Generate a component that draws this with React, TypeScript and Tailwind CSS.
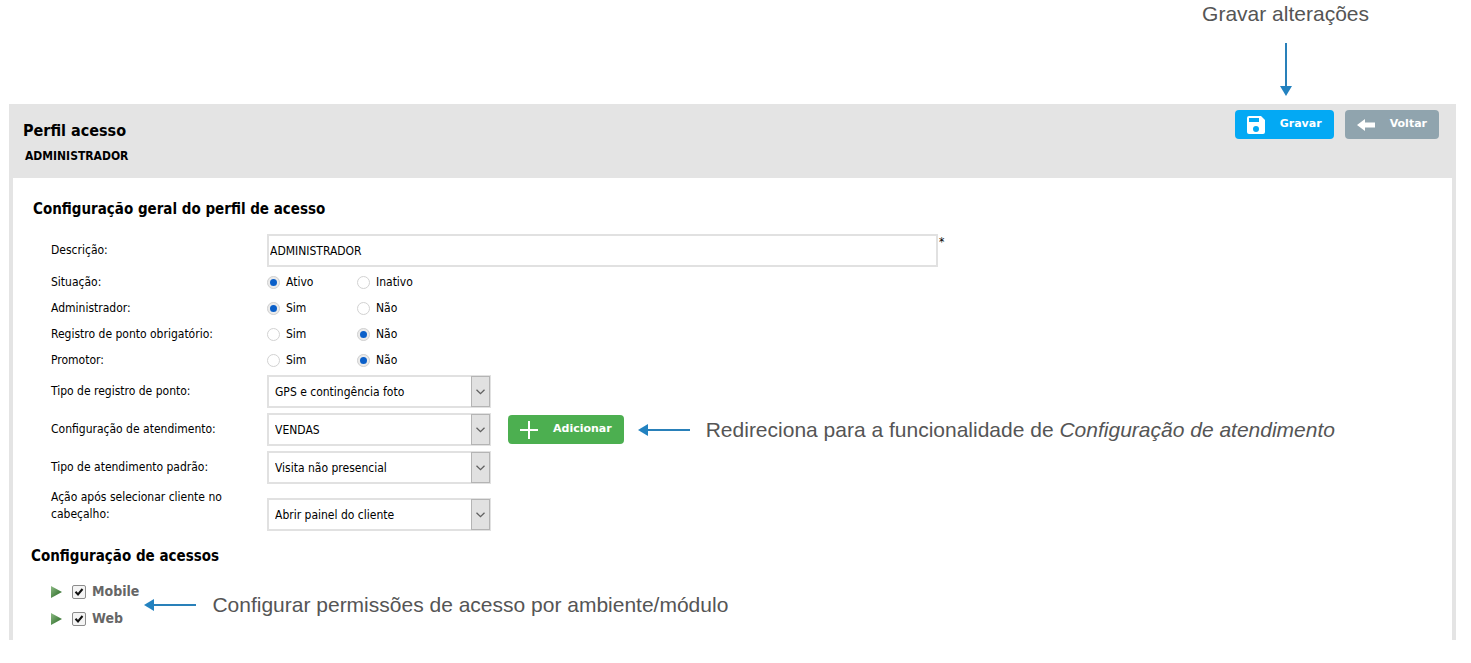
import { useId } from 'react'
import type { ReactNode } from 'react'

interface RadioOption {
  label: string
  checked?: boolean
}

interface RadioField {
  label: string
  name: string
  options: RadioOption[]
}

const radioFields: RadioField[] = [
  {
    label: 'Situação:',
    name: 'situacao',
    options: [{ label: 'Ativo', checked: true }, { label: 'Inativo' }],
  },
  {
    label: 'Administrador:',
    name: 'administrador',
    options: [{ label: 'Sim', checked: true }, { label: 'Não' }],
  },
  {
    label: 'Registro de ponto obrigatório:',
    name: 'registro',
    options: [{ label: 'Sim' }, { label: 'Não', checked: true }],
  },
  {
    label: 'Promotor:',
    name: 'promotor',
    options: [{ label: 'Sim' }, { label: 'Não', checked: true }],
  },
]

export default function App() {
  return (
    <div className="bg-white pr-[15px] pb-6 pl-[9px] font-['DejaVu_Sans_Condensed','DejaVu_Sans',sans-serif] text-[12px] text-black">
      <div className="flex h-[104px] justify-end pr-[87px]">
        <div className="flex flex-col items-center">
          <Note>Gravar alterações</Note>
          <ArrowDown />
        </div>
      </div>
      <main className="bg-[#e4e4e4] px-1">
        <header className="flex h-[74px] items-start justify-between pt-[6px] pr-[13px] pl-[10px]">
          <div className="pt-[10px]">
            <h1 className="text-[16px] leading-[22px] font-bold">
              Perfil acesso
            </h1>
            <p className="mt-[6px] pl-[2px] text-[12px] leading-4 font-bold">
              ADMINISTRADOR
            </p>
          </div>
          <div className="flex gap-[11px]">
            <Button className="bg-[#03a9f4]">
              <SaveIcon />
              <span>Gravar</span>
            </Button>
            <Button className="bg-[#90a4ae]">
              <BackIcon />
              <span>Voltar</span>
            </Button>
          </div>
        </header>
        <div className="bg-white pt-[19px] pb-2">
          <section>
            <h2 className="pl-5 text-[15px] leading-6 font-bold">
              Configuração geral do perfil de acesso
            </h2>
            <div className="mt-[11px] pl-[38px]">
              <div className="flex h-[37px] items-start pt-[2px]">
                <label
                  htmlFor="descricao"
                  className="w-[216px] shrink-0 leading-[33px]"
                >
                  Descrição:
                </label>
                <input
                  id="descricao"
                  defaultValue="ADMINISTRADOR"
                  className="h-[33px] w-[671px] border-2 border-[#e1e1e1] bg-white px-px outline-none"
                />
                <span className="pl-px leading-4">*</span>
              </div>
              {radioFields.map(field => (
                <RadioRow key={field.name} {...field} />
              ))}
              <SelectRow
                label="Tipo de registro de ponto:"
                value="GPS e contingência foto"
              />
              <SelectRow label="Configuração de atendimento:" value="VENDAS">
                <Button className="ml-[17px] bg-[#4caf50]">
                  <PlusIcon />
                  <span>Adicionar</span>
                </Button>
                <div className="ml-[14px] flex items-center gap-4">
                  <ArrowLeft />
                  <Note>
                    Redireciona para a funcionalidade de{' '}
                    <em>Configuração de atendimento</em>
                  </Note>
                </div>
              </SelectRow>
              <SelectRow
                label="Tipo de atendimento padrão:"
                value="Visita não presencial"
              />
              <SelectRow
                label="Ação após selecionar cliente no cabeçalho:"
                value="Abrir painel do cliente"
                tall
              />
            </div>
          </section>
          <section>
            <h2 className="mt-[10px] pl-[18px] text-[15px] leading-6 font-bold">
              Configuração de acessos
            </h2>
            <div className="mt-[10px] flex items-center pl-[38px]">
              <ul>
                <AccessItem label="Mobile" />
                <AccessItem label="Web" />
              </ul>
              <div className="ml-[5px] flex items-center gap-4">
                <ArrowLeft />
                <Note>Configurar permissões de acesso por ambiente/módulo</Note>
              </div>
            </div>
          </section>
        </div>
      </main>
    </div>
  )
}

function Note({ children }: { children: ReactNode }) {
  return (
    <p className="font-['Liberation_Sans',Arial,sans-serif] text-[21px] leading-7 whitespace-nowrap text-[#555]">
      {children}
    </p>
  )
}

function Button({
  className,
  children,
}: {
  className: string
  children: ReactNode
}) {
  return (
    <button
      type="button"
      className={`flex h-[29px] shrink-0 items-center gap-[15px] rounded px-3 font-['DejaVu_Sans',sans-serif] text-[11px] font-bold text-white ${className}`}
    >
      {children}
    </button>
  )
}

function RadioRow({ label, name, options }: RadioField) {
  return (
    <fieldset className="flex h-[26px] items-center">
      <legend className="float-left w-[216px] leading-[26px]">{label}</legend>
      {options.map(option => (
        <label key={option.label} className="flex w-[90px] items-center gap-[6px]">
          <input
            type="radio"
            name={name}
            defaultChecked={option.checked}
            className="size-[13px] appearance-none rounded-full border border-[#d2d2d2] bg-white checked:border-[3px] checked:border-[#ebebeb] checked:bg-[#0a5fc9] checked:outline checked:-outline-offset-1 checked:outline-[#d2d2d2]"
          />
          {option.label}
        </label>
      ))}
    </fieldset>
  )
}

interface SelectRowProps {
  label: string
  value: string
  tall?: boolean
  children?: ReactNode
}

function SelectRow({ label, value, tall, children }: SelectRowProps) {
  const id = useId()

  return (
    <div className="flex items-start pt-[2px] pb-[3px]">
      <label
        htmlFor={id}
        className={
          tall
            ? 'w-[216px] shrink-0 pr-8 leading-[17px]'
            : 'w-[216px] shrink-0 leading-[33px]'
        }
      >
        {label}
      </label>
      <div className={tall ? 'relative mt-[9px]' : 'relative'}>
        <select
          id={id}
          className="block h-[33px] w-[224px] appearance-none border-2 border-[#e1e1e1] bg-white pl-[6px] outline-none"
        >
          <option>{value}</option>
        </select>
        <span className="pointer-events-none absolute inset-y-px right-px flex w-[19px] items-center justify-center border border-[#b4b4b4] bg-[#e1e1e1]">
          <svg width="9" height="6" viewBox="0 0 9 6" fill="none">
            <path d="M.5 .7l4 4l4-4" stroke="#606060" strokeWidth="1.3" />
          </svg>
        </span>
      </div>
      {children && <div className="flex h-[33px] items-center">{children}</div>}
    </div>
  )
}

function AccessItem({ label }: { label: string }) {
  const gradientId = useId()

  return (
    <li className="flex h-[27px] items-center">
      <button type="button" aria-label={`Expandir ${label}`}>
        <svg width="11" height="12" viewBox="0 0 11 12">
          <defs>
            <linearGradient id={gradientId} x1="0" y1="0" x2="1" y2="1">
              <stop offset="0" stopColor="#8dbb85" />
              <stop offset="0.6" stopColor="#4b8545" />
              <stop offset="1" stopColor="#3c7038" />
            </linearGradient>
          </defs>
          <path d="M0 0l11 6L0 12z" fill={`url(#${gradientId})`} />
        </svg>
      </button>
      <label className="flex items-center gap-[6px] pl-[10px] text-[14px] font-bold text-[#666]">
        <span className="relative flex">
          <input
            type="checkbox"
            defaultChecked
            className="peer size-[14px] appearance-none rounded-[2px] border border-[#8c8c8c] bg-[#f4f4f4]"
          />
          <svg
            className="pointer-events-none absolute inset-0 hidden peer-checked:block"
            width="14"
            height="14"
            viewBox="0 0 14 14"
            fill="none"
          >
            <path d="M3.500 6.800l2.500 2.700L10.500 4" stroke="#111" strokeWidth="2" />
          </svg>
        </span>
        {label}
      </label>
    </li>
  )
}

function ArrowDown() {
  return (
    <svg className="mt-[15px]" width="12" height="53" viewBox="0 0 12 53">
      <path d="M6 0v44" stroke="#2980b9" strokeWidth="2" />
      <path d="M0 43h12L6 53z" fill="#2382c0" />
    </svg>
  )
}

function ArrowLeft() {
  return (
    <svg className="shrink-0" width="52" height="12" viewBox="0 0 52 12">
      <path d="M9 6h43" stroke="#2980b9" strokeWidth="2" />
      <path d="M10 0v12L0 6z" fill="#2382c0" />
    </svg>
  )
}

function SaveIcon() {
  return (
    <svg width="18" height="18" viewBox="0 0 18 18">
      <path
        fill="#fff"
        fillRule="evenodd"
        d="M2 0h12l4 4v12a2 2 0 0 1-2 2H2a2 2 0 0 1-2-2V2a2 2 0 0 1 2-2zM2 2v4h10V2zM9 10a3 3 0 1 0 0 6a3 3 0 0 0 0-6z"
      />
    </svg>
  )
}

function BackIcon() {
  return (
    <svg width="18" height="12" viewBox="0 0 18 12">
      <path d="M0 6l8-6v3.500h10v5H8V12z" fill="#fff" />
    </svg>
  )
}

function PlusIcon() {
  return (
    <svg width="18" height="18" viewBox="0 0 18 18">
      <path d="M9 0v18M0 9h18" stroke="#fff" strokeWidth="2" />
    </svg>
  )
}
